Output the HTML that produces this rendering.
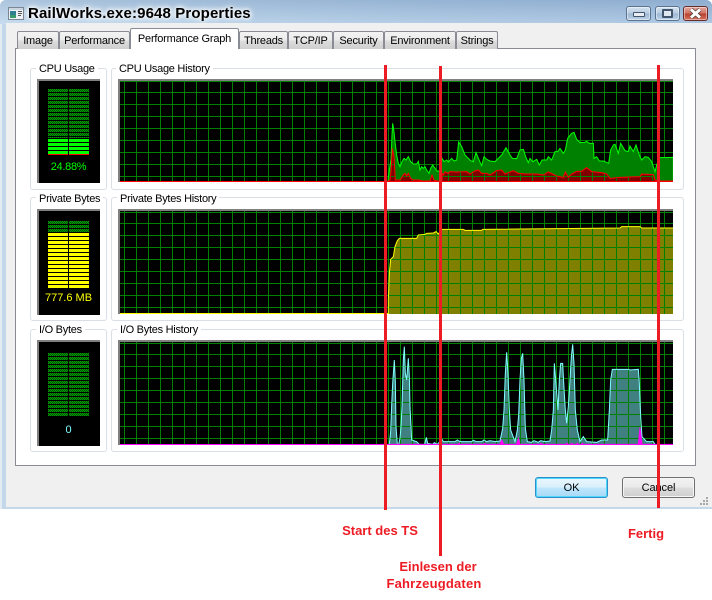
<!DOCTYPE html>
<html>
<head>
<meta charset="utf-8">
<style>
html,body{margin:0;padding:0;background:#fff}
#w{position:relative;width:712px;height:600px;overflow:hidden;background:#fff;font-family:"Liberation Sans",sans-serif;font-size:11px;color:#000}
#w div{position:absolute;box-sizing:border-box}
.frame{left:0;top:0;width:712px;height:509px;background:linear-gradient(90deg,#e4ecf3 0,#e4ecf3 2px,#c4d8ec 2px,#c4d8ec 100%);border-radius:6px 6px 0 0}
.cap{left:0;top:0;width:712px;height:24px;background:linear-gradient(90deg,#c8dbeb 0,#b5cde3 25%,#a5c0dc 60%,#9ab7d6 100%);border-radius:6px 6px 0 0}
.capb{left:0;top:0;width:712px;height:24px;background:linear-gradient(180deg,rgba(120,155,195,.35),rgba(200,222,243,.45));border-radius:6px 6px 0 0}
.body{left:6px;top:23px;width:706px;height:484px;background:#f0f0f0}
.title{left:28px;top:5px;font-weight:bold;font-size:15px;line-height:17px;white-space:nowrap;letter-spacing:.13px;text-shadow:0 0 4px #fff,0 0 6px #fff,0 0 8px #fff}
.panel{left:15px;top:48px;width:681px;height:418px;background:#fff;border:1px solid #898c95}
.tab{top:31px;height:18px;border:1px solid #898c95;border-bottom:none;border-radius:2px 2px 0 0;background:linear-gradient(#f3f3f3,#ebebeb 48%,#dddddd 52%,#cfcfcf);text-align:center;line-height:18px;white-space:nowrap;letter-spacing:-.2px}
.tab.s{top:28px;height:21px;background:#fff;line-height:20px;z-index:2}
.g{border:1px solid #d9dfe5;border-radius:3px}
.lg{background:#fff;padding:0 3px;line-height:13px;white-space:nowrap;height:13px;letter-spacing:-.27px}
.m{text-align:center;white-space:nowrap;line-height:14px;font-size:11px}
.wb{top:6px;height:15px;width:25px;border-radius:3px;border:1px solid #5a7391;background:linear-gradient(#d6e3f0,#b6cbe2 48%,#9db7d3 52%,#bdd3e8);box-shadow:inset 0 0 0 1px rgba(255,255,255,.45)}
.btn{top:477px;height:21px;border-radius:3px;text-align:center;line-height:20px;letter-spacing:-.1px}
.red{background:#ed1c24;z-index:5}
.t{color:#ed1c24;font-weight:bold;font-size:13px;line-height:15px;white-space:nowrap;text-align:center}
svg{position:absolute;left:0;top:0}
</style>
</head>
<body>
<div id="w">
<div class="frame"></div>
<div class="cap"></div>
<div class="capb"></div>
<div class="body"></div>

<svg width="30" height="24" style="z-index:1" shape-rendering="crispEdges">
<rect x="8.5" y="7.5" width="15" height="12" fill="#eef2f5" stroke="#7b8794"/>
<rect x="9" y="8" width="14" height="2" fill="#c9d6e2"/>
<rect x="10" y="11" width="6" height="7" fill="#2f7f8f"/>
<rect x="10" y="15" width="6" height="3" fill="#3b9a6a"/>
<rect x="18" y="11" width="4" height="1" fill="#555"/>
<rect x="18" y="13" width="4" height="1" fill="#555"/>
<rect x="18" y="15" width="3" height="1" fill="#555"/>
</svg>
<div class="title">RailWorks.exe:9648 Properties</div>

<div class="wb" style="left:626px"><div style="left:6px;top:5px;width:12px;height:5px;border:1px solid #44566c;background:#e8eef4;border-radius:1px"></div></div>
<div class="wb" style="left:655px"><div style="left:6px;top:2px;width:11px;height:9px;border:2px solid #44566c;background:#dfe8f1;border-radius:1px"></div></div>
<div class="wb" style="left:683px;border-color:#6b2a2a;background:linear-gradient(#e3a79e,#cf7466 48%,#b9412f 52%,#d2705c)">
<svg width="23" height="13" style="left:0;top:0"><path d="M7 2.5 L16 10.5 M16 2.5 L7 10.5" stroke="#4a3a3a" stroke-width="4.4"/><path d="M7 2.5 L16 10.5 M16 2.5 L7 10.5" stroke="#fff" stroke-width="3"/></svg>
</div>

<div class="panel"></div>
<div class="tab" style="left:17px;width:42px">Image</div>
<div class="tab" style="left:59px;width:71px">Performance</div>
<div class="tab s" style="left:130px;width:109px">Performance Graph</div>
<div class="tab" style="left:239px;width:49px">Threads</div>
<div class="tab" style="left:288px;width:45px">TCP/IP</div>
<div class="tab" style="left:333px;width:51px">Security</div>
<div class="tab" style="left:384px;width:72px">Environment</div>
<div class="tab" style="left:456px;width:42px">Strings</div>

<div class="g" style="left:30px;top:68px;width:77px;height:122px"></div>
<div class="g" style="left:111px;top:68px;width:573px;height:122px"></div>
<div class="g" style="left:30px;top:197px;width:77px;height:124px"></div>
<div class="g" style="left:111px;top:197px;width:573px;height:124px"></div>
<div class="g" style="left:30px;top:329px;width:77px;height:123px"></div>
<div class="g" style="left:111px;top:329px;width:573px;height:123px"></div>

<div class="lg" style="left:36px;top:63px">CPU Usage</div>
<div class="lg" style="left:116px;top:63px">CPU Usage History</div>
<div class="lg" style="left:36px;top:193px">Private Bytes</div>
<div class="lg" style="left:117px;top:193px">Private Bytes History</div>
<div class="lg" style="left:36px;top:324px">I/O Bytes</div>
<div class="lg" style="left:117px;top:324px">I/O Bytes History</div>

<svg width="712" height="600">
<defs>
<pattern id="dim" patternUnits="userSpaceOnUse" x="0" y="1" width="2" height="4">
<rect x="0" y="0" width="1" height="1" fill="#00a000"/>
<rect x="1" y="1" width="1" height="1" fill="#00a000"/>
<rect x="0" y="2" width="1" height="1" fill="#00a000"/>
<rect x="1" y="0" width="1" height="1" fill="#005000"/>
<rect x="1" y="2" width="1" height="1" fill="#005000"/>
<rect x="0" y="1" width="1" height="1" fill="#005000"/>
</pattern>
<pattern id="litG" patternUnits="userSpaceOnUse" x="0" y="139" width="2" height="4"><rect width="2" height="3" fill="#00ff00"/></pattern>
<pattern id="litY" patternUnits="userSpaceOnUse" x="0" y="233" width="2" height="4"><rect width="2" height="3" fill="#ffff00"/></pattern>
<path id="gv" d="M124.5 0v600m12-600v600m12-600v600m12-600v600m12-600v600m12-600v600m12-600v600m12-600v600m12-600v600m12-600v600m12-600v600m12-600v600m12-600v600m12-600v600m12-600v600m12-600v600m12-600v600m12-600v600m12-600v600m12-600v600m12-600v600m12-600v600m12-600v600m12-600v600m12-600v600m12-600v600m12-600v600m12-600v600m12-600v600m12-600v600m12-600v600m12-600v600m12-600v600m12-600v600m12-600v600m12-600v600m12-600v600m12-600v600m12-600v600m12-600v600m12-600v600m12-600v600m12-600v600m12-600v600m12-600v600m12-600v600"/>
<path id="gh" d="M120 .5h553m-553 12h553m-553 12h553m-553 12h553m-553 12h553m-553 12h553m-553 12h553m-553 12h553"/>
<clipPath id="c1"><rect x="120" y="81" width="553" height="101"/></clipPath>
<clipPath id="c2"><rect x="120" y="211" width="553" height="103"/></clipPath>
<clipPath id="c3"><rect x="120" y="342" width="553" height="103"/></clipPath>
<polyline id="pg" vector-effect="non-scaling-stroke" points="24,243 27,215 33,180 36,105 38,70 42,95 45,125 50,165 55,190 60,200 66,185 72,175 78,180 85,170 92,185 100,192 110,192 115,184 120,210 125,200 130,205 135,200 140,210 147,220 152,205 158,195 165,205 172,214 180,212 186,175 192,185 200,180 205,186 215,175 222,183 230,180 236,126 245,140 255,165 265,175 272,182 280,185 288,158 295,175 305,197 312,170 320,178 330,183 345,185 355,175 365,165 378,143 390,165 397,175 410,176 420,150 430,148 437,170 445,188 450,175 458,185 470,178 478,195 486,180 500,180 505,170 515,180 525,155 533,155 540,145 550,160 556,150 563,115 575,100 582,97 590,118 600,128 615,127 620,124 628,130 640,130 642,175 650,170 658,183 670,183 686,190 692,150 700,135 705,133 715,160 722,130 735,152 745,155 750,138 760,155 768,135 778,165 785,180 795,170 805,172 815,185 825,215 830,195 838,173 880,172 880,243"/>
<polyline id="pr" vector-effect="non-scaling-stroke" points="24,243 30,240 33,215 37,145 42,170 46,240 60,240 70,225 75,220 80,228 85,220 92,235 100,240 118,240 125,243 150,243 156,225 162,240 170,243 186,243 186,220 190,225 195,215 205,220 210,215 230,216 260,215 270,222 285,213 295,210 305,220 320,220 330,225 350,212 365,210 375,222 400,212 415,220 440,222 470,222 490,225 505,216 530,228 550,232 556,216 565,232 575,222 590,214 605,214 620,203 635,215 665,218 680,222 690,235 720,232 780,230 785,222 820,224 825,240 838,243 880,243"/>
<polyline id="py" vector-effect="non-scaling-stroke" points="55,345 55,300 58,220 62,178 70,170 75,140 82,122 88,115 140,115 145,105 165,103 170,100 190,99 198,95 205,102 215,88 280,88 285,91 335,91 338,88 750,84 755,80 810,80 815,84 925,84 925,345"/>
<polyline id="pi" vector-effect="non-scaling-stroke" points="28,343 32,305 35,225 38,160 43,90 46,155 48,290 52,343 56,343 60,325 63,290 66,230 70,90 73,50 76,130 80,150 85,85 88,140 90,230 95,330 110,335 118,343 134,343 139,322 143,340 158,343 163,338 172,343 186,328 190,335 225,335 232,330 240,335 275,335 280,331 290,335 305,335 312,330 320,335 330,332 345,335 360,333 368,295 372,240 376,130 380,67 384,130 388,240 392,300 405,335 412,300 416,255 420,150 424,85 428,70 432,150 436,295 442,335 455,337 462,332 475,337 482,332 495,335 510,333 515,300 520,240 523,100 527,150 534,240 538,150 542,100 548,100 552,175 556,240 560,280 565,230 570,150 574,80 578,43 582,100 586,240 592,300 600,335 610,320 620,335 650,337 665,330 683,330 688,240 692,150 697,118 745,118 750,120 775,118 778,160 782,260 786,320 800,335 820,335 825,343"/>
<polyline id="pm" vector-effect="non-scaling-stroke" points="0,343 235,343 238,340 241,343 312,343 315,340 318,343 360,343 365,330 371,343 410,343 415,325 420,343 480,343 483,340 486,343 558,343 561,340 564,343 572,343 575,340 578,343 590,343 592,340 594,343 604,343 607,340 610,343 775,343 780,292 786,343 880,343"/>
</defs>

<!-- meters -->
<rect x="37" y="79" width="63" height="104" fill="#808080"/><rect x="39" y="81" width="61" height="102" fill="#000"/>
<rect x="37" y="209" width="63" height="106" fill="#808080"/><rect x="39" y="211" width="61" height="104" fill="#000"/>
<rect x="37" y="340" width="63" height="106" fill="#808080"/><rect x="39" y="342" width="61" height="104" fill="#000"/>

<g shape-rendering="crispEdges">
<rect x="48" y="89" width="20" height="49" fill="url(#dim)"/><rect x="69" y="89" width="20" height="49" fill="url(#dim)"/>
<rect x="48" y="139" width="20" height="15" fill="url(#litG)"/><rect x="69" y="139" width="20" height="15" fill="url(#litG)"/>
<rect x="48" y="154" width="20" height="1" fill="#ff0000"/><rect x="69" y="154" width="20" height="1" fill="#ff0000"/>
<rect x="48" y="221" width="20" height="11" fill="url(#dim)"/><rect x="69" y="221" width="20" height="11" fill="url(#dim)"/>
<rect x="48" y="233" width="20" height="55" fill="url(#litY)"/><rect x="69" y="233" width="20" height="55" fill="url(#litY)"/>
<rect x="48" y="353" width="20" height="64" fill="url(#dim)"/><rect x="69" y="353" width="20" height="64" fill="url(#dim)"/>
</g>

<!-- CPU graph -->
<rect x="118" y="79" width="555" height="103" fill="#808080"/><rect x="120" y="81" width="553" height="101" fill="#000"/>
<g clip-path="url(#c1)">
<g transform="translate(380,100) scale(.33333)">
<use href="#pg" fill="#008000" stroke="none"/>
<use href="#pr" fill="#800000" stroke="none"/>
</g>
<g fill="none" stroke="#008000" stroke-width="1" shape-rendering="crispEdges">
<use href="#gv"/><use href="#gh" y="92"/>
<path d="M120 81.5h553"/>
</g>
<g transform="translate(380,100) scale(.33333)">
<use href="#pg" fill="none" stroke="#00ff00" stroke-width="1"/>
<use href="#pr" fill="none" stroke="#ff0000" stroke-width="1"/>
</g>
<rect x="120" y="181" width="553" height="1" fill="#ff0000" shape-rendering="crispEdges"/>
</g>

<!-- Private graph -->
<rect x="118" y="209" width="555" height="105" fill="#808080"/><rect x="120" y="211" width="553" height="103" fill="#000"/>
<g clip-path="url(#c2)">
<g transform="translate(370,200) scale(.33333)"><use href="#py" fill="#808000" stroke="none"/></g>
<g fill="none" stroke="#008000" stroke-width="1" shape-rendering="crispEdges">
<use href="#gv"/><use href="#gh" y="223"/>
<path d="M120 212.5h553"/>
</g>
<g transform="translate(370,200) scale(.33333)"><use href="#py" fill="none" stroke="#ffff00" stroke-width="1"/></g>
<rect x="120" y="313" width="268" height="1" fill="#ffff00" shape-rendering="crispEdges"/>
</g>

<!-- IO graph -->
<rect x="118" y="340" width="555" height="105" fill="#808080"/><rect x="120" y="342" width="553" height="103" fill="#000"/>
<g clip-path="url(#c3)">
<g transform="translate(380,330) scale(.33333)"><use href="#pi" fill="#408080" stroke="none"/></g>
<g fill="none" stroke="#008000" stroke-width="1" shape-rendering="crispEdges">
<use href="#gv"/><use href="#gh" y="354"/>
<path d="M120 343.5h553"/>
</g>
<g transform="translate(380,330) scale(.33333)">
<use href="#pi" fill="none" stroke="#7fffff" stroke-width="1"/>
<use href="#pm" fill="#ff00ff" stroke="#ff00ff" stroke-width="1"/>
</g>
<rect x="120" y="444" width="553" height="1" fill="#ff00ff" shape-rendering="crispEdges"/>
</g>

<!-- resize grip -->
<g fill="#a8a8a8" shape-rendering="crispEdges">
<rect x="706" y="497" width="2" height="2"/><rect x="706" y="500" width="2" height="2"/><rect x="703" y="500" width="2" height="2"/>
<rect x="706" y="503" width="2" height="2"/><rect x="703" y="503" width="2" height="2"/><rect x="700" y="503" width="2" height="2"/>
</g>
</svg>

<div class="m" style="left:39px;top:160px;width:59px;color:#00ff00;letter-spacing:-.3px">24.88%</div>
<div class="m" style="left:39px;top:291px;width:59px;color:#ffff00">777.6 MB</div>
<div class="m" style="left:39px;top:423px;width:59px;color:#7fffff">0</div>

<div class="btn" style="left:535px;width:73px;border:1px solid #2c8fc9;box-shadow:inset 0 0 0 1px #4fd8fb;background:linear-gradient(#eaf6fd,#d9f0fc 48%,#bee6fd 52%,#a7d9f5)">OK</div>
<div class="btn" style="left:622px;width:73px;border:1px solid #707070;box-shadow:inset 0 0 0 1px #f6f6f6;background:linear-gradient(#f2f2f2,#ebebeb 48%,#dddddd 52%,#cfcfcf)">Cancel</div>

<div class="red" style="left:384px;top:65px;width:3px;height:445px"></div>
<div class="red" style="left:439px;top:66px;width:3px;height:490px"></div>
<div class="red" style="left:657px;top:65px;width:3px;height:443px"></div>

<div class="t" style="left:340px;top:523px;width:80px">Start des TS</div>
<div class="t" style="left:388px;top:559px;width:100px">Einlesen der</div>
<div class="t" style="left:376px;top:576px;width:116px;letter-spacing:.2px">Fahrzeugdaten</div>
<div class="t" style="left:620px;top:526px;width:52px">Fertig</div>
</div>
</body>
</html>
